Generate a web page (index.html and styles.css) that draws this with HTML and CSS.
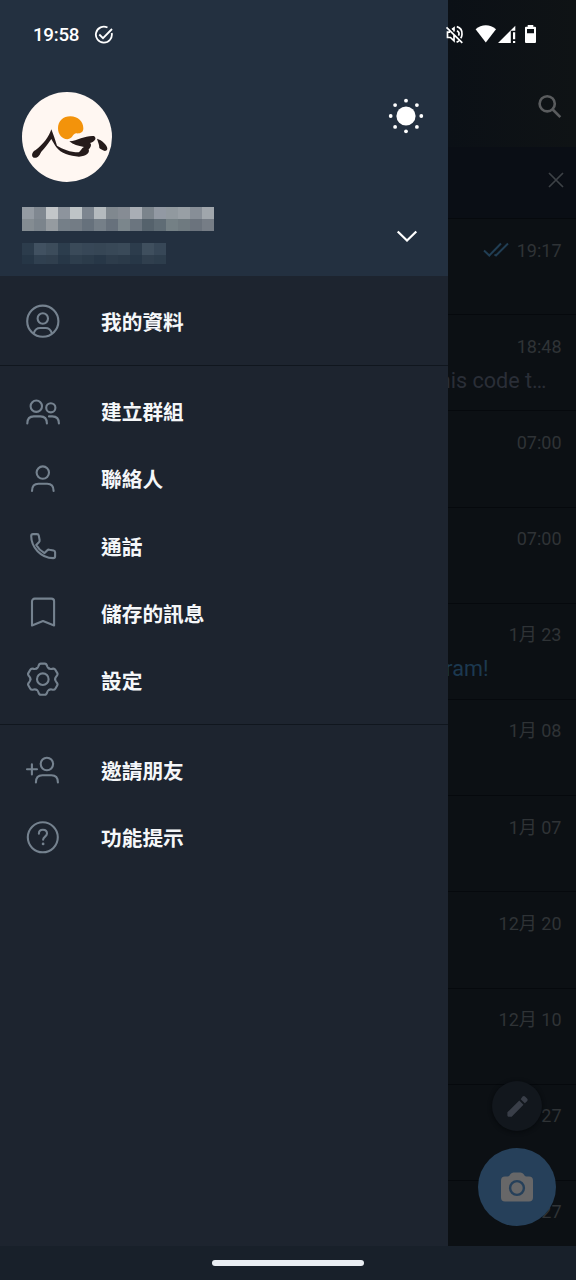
FILE: index.html
```html
<!DOCTYPE html>
<html lang="zh-Hant">
<head>
<meta charset="utf-8">
<title>Menu</title>
<link rel="stylesheet" href="styles.css">
</head>
<body>
<div class="screen">
  <main class="chats">
    <header class="appbar">
      <svg class="search" viewBox="0 0 28 28"><circle cx="11.2" cy="10.8" r="7.6"/><path d="M16.7 16.500 24.300 24.200"/></svg>
    </header>
    <div class="banner">
      <svg class="close" viewBox="0 0 16 16"><path d="M1 1 15 15M15 1 1 15"/></svg>
    </div>
    <ul class="list">
      <li class="chat"><div class="when"><svg class="checks" viewBox="0 0 26 16"><path d="M1 8.500 6.300 13.500 18 1.500M11.500 12.500 13 13.500 25 1.500"/></svg><time>19:17</time></div></li>
      <li class="chat"><div class="when"><time>18:48</time></div><p class="preview">his code t…</p></li>
      <li class="chat"><div class="when"><time>07:00</time></div></li>
      <li class="chat"><div class="when"><time>07:00</time></div></li>
      <li class="chat"><div class="when"><time>1月 23</time></div><p class="preview preview-link">ram!</p></li>
      <li class="chat"><div class="when"><time>1月 08</time></div></li>
      <li class="chat"><div class="when"><time>1月 07</time></div></li>
      <li class="chat"><div class="when"><time>12月 20</time></div></li>
      <li class="chat"><div class="when"><time>12月 10</time></div></li>
      <li class="chat"><div class="when"><time>27</time></div></li>
      <li class="chat"><div class="when"><time>27</time></div></li>
    </ul>
    <div class="fabs">
      <div class="fab fab-small">
        <svg viewBox="0 0 24 24" width="27" height="27"><path d="M3 17.200V20q0 1 1 1h2.800L17.300 10.400 13.600 6.700zM20.700 7a1.800 1.800 0 0 0 0-1.900l-1.800-1.800a1.800 1.800 0 0 0-2.400-.1L14.800 5.500l3.700 3.700z"/></svg>
      </div>
      <div class="fab fab-large">
        <svg viewBox="0 0 32 30" width="32" height="30"><path d="M4 4.500h2.500q1.300 0 2-1L9.500 2Q10.700.500 12.500.500h7q1.800 0 3 1.500l1 1.500q.7 1 2 1H28q4 0 4 4V25.500q0 4-4 4H4q-4 0-4-4V8.500q0-4 4-4z"/><circle class="lens" cx="16" cy="16" r="6.900"/></svg>
      </div>
    </div>
  </main>

  <aside class="drawer">
    <header class="profile">
      <div class="profile-top">
        <svg class="avatar" viewBox="36 21 270 270">
          <circle cx="171" cy="156" r="135" fill="#fff7f2"/>
          <path fill="#f3930b" d="M144 130C144 108 160 94 181 94 204 94 220 110 220 130 220 145 208 146 198 145 186 147 190 161 172 163 156 162 144 148 144 130z"/>
          <g fill="#251b1b">
            <path d="M124 133C117 155 100 178 77 195 65 201 63 214 71 218 84 221 89 209 94 200 106 188 116 174 124 162 130 172 134 180 139 187 152 205 180 214 207 215 230 214 240 203 236 193 242 188 246 178 240 174 254 170 262 160 252 153 225 151 205 166 178 169 190 179 204 183 222 186 214 190 216 194 206 202 180 202 158 192 141 182 136 166 130 148 124 133z"/>
            <path d="M261 161C275 165 293 180 292 192 287 204 275 194 268 189 268 178 264 172 261 161z"/>
          </g>
        </svg>
        <svg class="sun" viewBox="-18 -18 36 36">
          <circle r="9.600"/>
          <circle cy="-15.300" r="1.900"/><circle cy="15.300" r="1.900"/><circle cx="-15.300" r="1.900"/><circle cx="15.300" r="1.900"/>
          <circle cx="-10.900" cy="-10.900" r="1.900"/><circle cx="10.900" cy="-10.900" r="1.900"/><circle cx="-10.900" cy="10.900" r="1.900"/><circle cx="10.900" cy="10.900" r="1.900"/>
        </svg>
      </div>
      <div class="account">
        <div class="masked">
          <div class="mosaic name-a"></div>
          <div class="mosaic name-b"></div>
          <div class="mosaic phone-a"></div>
          <div class="mosaic phone-b"></div>
        </div>
        <svg class="chevron" viewBox="0 0 22 12"><path d="M1.700 1.500 11 10.500 20.300 1.500"/></svg>
      </div>
    </header>
    <nav class="menu">
      <ul class="group">
        <li class="item"><svg class="icon" viewBox="0 0 40 40"><circle cx="19.800" cy="19.200" r="15.600"/><circle cx="19.800" cy="16.500" r="5.200"/><path d="M10.800 31C12 27.500 13.500 26 17 26h5.600c3.500 0 5 1.500 6.200 5"/></svg><span class="label">我的資料</span></li>
      </ul>
      <ul class="group">
        <li class="item"><svg class="icon" viewBox="0 0 40 40"><circle cx="13.300" cy="14.200" r="5.700"/><circle cx="27.800" cy="15.800" r="4.600"/><path d="M4.300 31.500c0-4.700 2.200-7.100 6.500-7.100h6.600c4.300 0 6.500 2.400 6.500 7.100M26 24.400h3.300c4.400 0 6.600 2.400 6.600 7.100"/></svg><span class="label">建立群組</span></li>
        <li class="item"><svg class="icon" viewBox="0 0 40 40"><circle cx="19.800" cy="13.600" r="6.200"/><path d="M9 32c0-5 2.300-7.200 6.500-7.200h8.600c4.200 0 6.500 2.200 6.500 7.200"/></svg><span class="label">聯絡人</span></li>
        <li class="item"><svg class="icon" viewBox="0 0 40 40"><path d="M8.200 10c0-1.100.7-1.900 1.800-1.900h4c1 0 1.600.5 1.800 1.500l.8 4.400c.2 1-.1 1.700-.7 2.300l-2.700 2.600c2.200 3.900 4.500 6 8.300 8.200l2.600-2.700c.6-.6 1.400-.9 2.300-.7l4.200.8c1 .2 1.500.8 1.500 1.800v4c0 1.100-.8 1.800-1.900 1.800C17.800 32.100 8.200 21 8.200 10z"/></svg><span class="label">通話</span></li>
        <li class="item"><svg class="icon" viewBox="0 0 40 40"><path d="M9 32.500V8.300a2.700 2.700 0 0 1 2.700-2.700h16.700a2.700 2.700 0 0 1 2.700 2.700V32.500L20 28z"/></svg><span class="label">儲存的訊息</span></li>
        <li class="item"><svg class="icon" viewBox="0 0 40 40"><defs><path id="cog" d="M-6.200-10.700Q-4.900-11.300-4.400-13-3.700-15.600-2-15.600H2Q3.700-15.600 4.400-13 4.900-11.300 6.200-10.700"/></defs><g transform="translate(19.800 19.200)"><use href="#cog"/><use href="#cog" transform="rotate(60)"/><use href="#cog" transform="rotate(120)"/><use href="#cog" transform="rotate(180)"/><use href="#cog" transform="rotate(240)"/><use href="#cog" transform="rotate(300)"/><circle r="5.800"/></g></svg><span class="label">設定</span></li>
      </ul>
      <ul class="group">
        <li class="item"><svg class="icon" viewBox="0 0 40 40"><circle cx="23.900" cy="14" r="6.200"/><path d="M12.900 32.400c0-5 2.300-7.200 6.500-7.200h9c4.200 0 6.500 2.200 6.500 7.200M4 19.300H14M8.900 14.200v10.200"/></svg><span class="label">邀請朋友</span></li>
        <li class="item"><svg class="icon" viewBox="0 0 40 40"><circle cx="19.800" cy="20.300" r="15"/><path d="M15.900 16.700c0-2.300 1.600-3.900 4-3.900s4.100 1.500 4.100 3.700c0 3-3.900 3.200-3.900 6.300"/><circle class="dot" cx="20.100" cy="26.900" r="1.400"/></svg><span class="label">功能提示</span></li>
      </ul>
    </nav>
  </aside>

  <div class="statusbar">
    <span class="clock">19:58</span>
    <svg class="task" viewBox="0 0 20 20"><path d="M13.500 2.500A8 8 0 1 0 17.700 8M5.300 9.500 9 13.200 18 4"/></svg>
    <svg class="system" viewBox="0 0 100 24">
      <g fill="none" stroke="#fff" stroke-width="1.700"><path d="M6.500 5.300 22.300 20.800M10 10.200H7.500V15.500H10.500L14 18.800V13M12 7.500 14 6V9.500M16.800 4.600C20.500 5.600 22.300 9 22 12.500 21.900 14 21.500 15.200 20.700 16.300M17 8.700C19 9.800 19.300 12 18.500 13.700M16.600 20.200 19 19"/></g>
      <g fill="#fff"><path d="M35.600 7.200C41.500 1.800 50.100 1.800 56 7.200L45.800 20.500z"/><path d="M58 21 75.300 3.700v5H70.800V21z"/><path d="M73 10.300h2.200v7H73zM73 18.900h2.200V21H73z"/><path fill-rule="evenodd" d="M87.700 3h5.600v1.700H95q1 0 1 1V20q0 1-1 1H86q-1 0-1-1V5.700q0-1 1-1h1.700zM87 7v4.300h7V7z"/></g>
    </svg>
  </div>
  <footer class="navbar"><div class="handle"></div></footer>
</div>
</body>
</html>
```

FILE: styles.css
```css
* { box-sizing: border-box; }
body { margin: 0; background: #0c1014; font-family: Roboto, "Noto Sans CJK TC", sans-serif; }
ul { list-style: none; margin: 0; padding: 0; }
p { margin: 0; }
svg { display: block; flex: none; }

.screen { position: relative; width: 576px; height: 1280px; overflow: hidden; display: flex; flex-direction: column; }

.chats { position: relative; flex: 1; min-height: 0; overflow: hidden; background: #0c1014; }
.appbar { height: 147px; display: flex; justify-content: flex-end; align-items: flex-end; padding: 0 12px 26px 0; background: linear-gradient(90deg, #0b1016 448px, #0f1315 576px); }
.search { width: 28px; height: 28px; fill: none; stroke: #5a5c5e; stroke-width: 2.600; }
.banner { height: 71px; display: flex; justify-content: flex-end; align-items: center; padding: 0 12px 5px 0; background: #0a0e15; }
.close { width: 16px; height: 16px; fill: none; stroke: #3d4146; stroke-width: 1.700; }
.chat { height: 96.200px; border-top: 1px solid #06090d; padding: 17.500px 14.500px 0 0; display: flex; flex-direction: column; align-items: flex-end; gap: 8px; }
.when { display: flex; align-items: center; gap: 8px; height: 27px; color: #2f3336; font: 18px/27px Roboto, "Noto Sans CJK TC", sans-serif; }
.when time { height: 27px; overflow: visible; }
.checks { width: 26px; height: 16px; fill: none; stroke: #213e54; stroke-width: 2; }
.preview { margin-right: 15px; font-size: 21.600px; line-height: 26px; color: #2a2e37; white-space: nowrap; }
.preview-link { margin-right: 73px; color: #1c3950; }

.fabs { position: absolute; right: 20px; bottom: 20px; display: flex; flex-direction: column; align-items: center; gap: 17px; }
.fab { border-radius: 50%; display: flex; align-items: center; justify-content: center; }
.fab-small { width: 50px; height: 50px; background: #12171d; box-shadow: 0 1px 4px #06090c; }
.fab-small svg { fill: #393e48; }
.fab-large { width: 78px; height: 78px; background: #26405a; }
.fab-large svg { fill: #676768; }
.lens { stroke: #26405a; stroke-width: 2.400; }

.drawer { position: absolute; left: 0; top: 0; width: 448px; height: 1246px; background: #1d242f; }
.profile { height: 276px; padding: 92px 24px 0 22px; background: #233040; }
.profile-top { display: flex; justify-content: space-between; }
.avatar { width: 90px; height: 90px; }
.sun { width: 36px; height: 36px; margin-top: 6px; fill: #fff; }
.account { display: flex; justify-content: space-between; padding: 25px 6px 0 0; }
.chevron { width: 22px; height: 12px; margin-top: 22.500px; fill: none; stroke: #fff; stroke-width: 2.200; }
.mosaic { height: 12px; }
.name-a { width: 192px; background: linear-gradient(90deg, #949ba3 0 12px, #808891 0 24px, #c2c6c9 0 36px, #8d949d 0 48px, #bec4c7 0 60px, #7d8690 0 72px, #b4babe 0 84px, #80888f 0 96px, #868c94 0 108px, #a9aeb5 0 120px, #7b848c 0 132px, #9299a3 0 144px, #91999f 0 156px, #989fa5 0 168px, #878e97 0 180px, #a0a6ac 0); }
.name-b { width: 192px; background: linear-gradient(90deg, #848c92 0 12px, #7b848c 0 24px, #959ba0 0 36px, #757f88 0 48px, #737c85 0 60px, #66717c 0 72px, #757f88 0 84px, #67717c 0 96px, #7b868c 0 108px, #6b757f 0 120px, #55626c 0 132px, #5f6c75 0 144px, #748085 0 156px, #6f7a80 0 168px, #6b737d 0 180px, #767d86 0); }
.phone-a { width: 144px; margin-top: 12px; background: linear-gradient(90deg, #2c3c4c 0 12px, #415161 0 24px, #3c4c5b 0 36px, #2c3d4d 0 48px, #3a4a59 0 60px, #374757 0 72px, #364655 0 84px, #384857 0 96px, #3a4a59 0 108px, #2c3c4c 0 120px, #3f4f5e 0 132px, #374757 0); }
.phone-b { width: 144px; height: 9px; background: linear-gradient(90deg, #263646 0 12px, #304050 0 24px, #303f4e 0 36px, #273747 0 48px, #2e3e4d 0 60px, #2b3b4a 0 72px, #273747 0 84px, #2d3c4b 0 96px, #2b3a49 0 108px, #273747 0 120px, #303f4e 0 132px, #2d3d4c 0); }

.group { padding: 12px 0 10px; border-bottom: 1px solid #10161e; }
.group:last-child { border-bottom: 0; }
.item { height: 67.100px; padding-left: 23px; display: flex; align-items: center; gap: 38px; color: #f5f7f9; font-size: 20.700px; font-weight: 700; line-height: 30px; }
.label { padding-top: 3.400px; }
.icon { width: 40px; height: 40px; fill: none; stroke: #75828f; stroke-width: 2.100; stroke-linecap: round; stroke-linejoin: round; }
.icon .dot { fill: #75828f; stroke: none; }

.statusbar { position: absolute; left: 0; top: 22px; width: 576px; height: 24px; padding: 0 36px 0 33px; display: flex; align-items: center; color: #fff; }
.clock { width: 61px; padding-top: 1px; font-size: 18.800px; letter-spacing: -0.300px; font-weight: 500; line-height: 24px; }
.task { width: 20px; height: 20px; margin-top: 1px; fill: none; stroke: #fff; stroke-width: 1.800; }
.system { width: 100px; height: 24px; margin-left: auto; }

.navbar { position: relative; flex: none; height: 34px; display: flex; justify-content: center; align-items: center; background: #18202a; }
.handle { width: 152px; height: 6px; border-radius: 3px; background: #e9edf2; }
```
